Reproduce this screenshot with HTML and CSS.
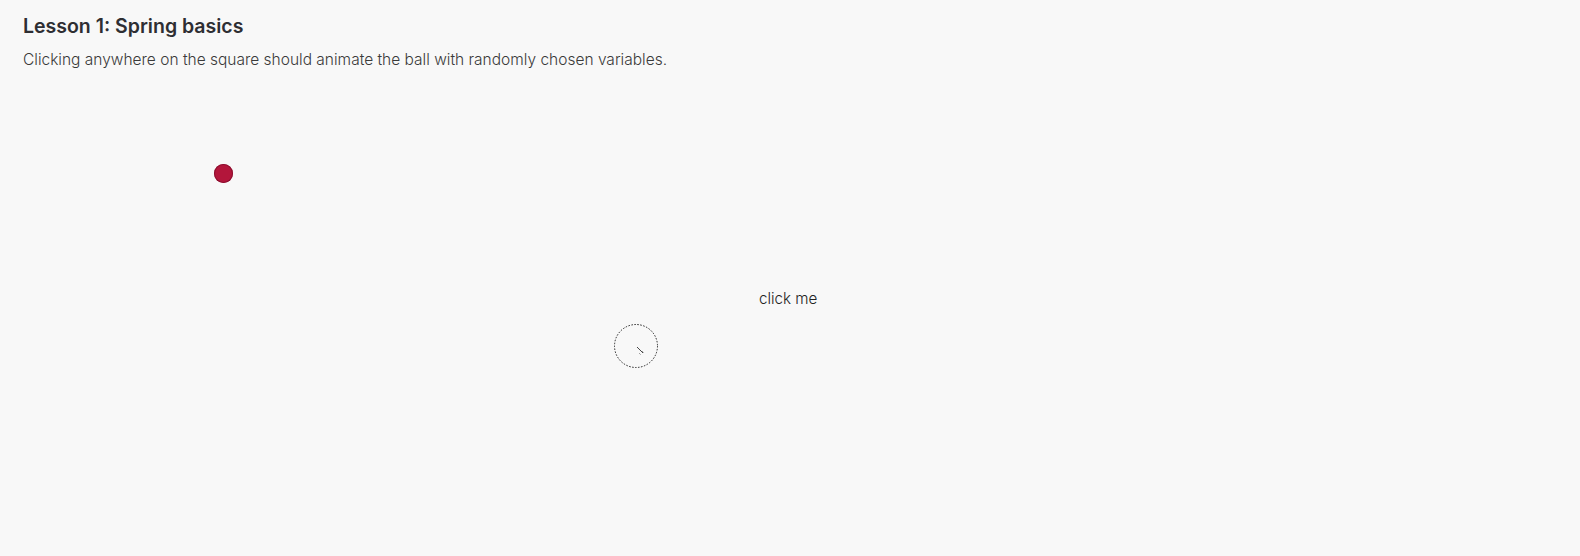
FILE: index.html
```html
<!DOCTYPE html>
<html>
<head>
<meta charset="utf-8">
<link rel="stylesheet" href="styles.css">
</head>
<body>
<div class="page">
  <h1 class="title">Lesson 1: Spring basics</h1>
  <p class="desc">Clicking anywhere on the square should animate the ball with randomly chosen variables.</p>
  <div class="stage">
    <div class="ball"></div>
    <div class="click-label">click me</div>
    <svg class="cursor" width="50" height="50" viewBox="0 0 50 50">
      <circle cx="25" cy="25" r="21.5" fill="none" stroke="#222" stroke-width="1" stroke-dasharray="1.5 1.5"/>
      <path d="M26 26 L32 32" stroke="#333" stroke-width="0.9"/>
      <path d="M28.5 32.5 L30 34 M31.5 30.5 L33 32" stroke="#333" stroke-width="0.9" stroke-dasharray="0.9 0.9"/>
    </svg>
  </div>
</div>
</body>
</html>
```
FILE: styles.css
```css
html, body {
  margin: 0;
  padding: 0;
  background: #f8f8f8;
}
body {
  font-family: Inter, "Noto Sans", sans-serif;
  color: #333;
}
.page {
  height: 556px;
  display: flex;
  flex-direction: column;
}
.title {
  margin: 14px 0 0 23px;
  font-size: 19.5px;
  font-weight: 600;
  line-height: 24px;
  color: #2e2e33;
  letter-spacing: 0;
}
.desc {
  margin: 12px 0 0 23px;
  font-size: 15.5px;
  font-weight: 300;
  line-height: 20px;
  color: #3a3a3a;
}
.stage {
  position: relative;
  flex: 1;
}
.ball {
  position: absolute;
  left: 214px;
  top: 94px;
  width: 19px;
  height: 19px;
  border-radius: 50%;
  background: #b3163b;
  box-shadow: inset 0 0 0 1px #8c1030;
}
.click-label {
  position: absolute;
  left: 759px;
  top: 219px;
  font-size: 15.2px;
  font-weight: 300;
  color: #222;
}
.cursor {
  position: absolute;
  left: 611px;
  top: 251px;
}
```
